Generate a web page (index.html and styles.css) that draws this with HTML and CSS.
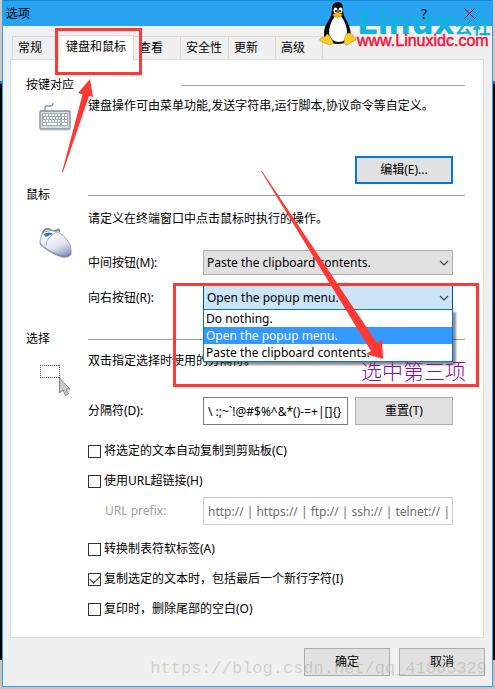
FILE: index.html
```
<!DOCTYPE html>
<html lang="zh-CN">
<head>
  <meta charset="UTF-8" />
  <meta name="viewport" content="width=device-width, initial-scale=1.0"/>
  <title>选项</title>
  <link rel="stylesheet" href="styles.css">
</head>
<body>
<div class="window">
  <header class="titlebar">
    <h1>选项</h1>
    <button class="win-btn" aria-label="帮助">?</button>
    <button class="win-btn" aria-label="关闭">
      <svg width="11" height="11" viewBox="0 0 11 11"><path d="M.5 .5l10 10M10.5 .5l-10 10" stroke="#111" fill="none"/></svg>
    </button>
  </header>

  <nav class="tabs">
    <button class="tab">常规</button>
    <button class="tab active">键盘和鼠标</button>
    <button class="tab">查看</button>
    <button class="tab">安全性</button>
    <button class="tab">更新</button>
    <button class="tab">高级</button>
  </nav>

  <main class="panel">
    <section class="group keys">
      <h2><span class="wide">按键对应</span></h2>
      <div class="icon">
        <svg width="32" height="30" viewBox="0 0 32 30">
          <path d="M6 9V6q0-2 2-2h3q3 0 3-3" fill="none" stroke="#8694a0" stroke-width="1.4"/>
          <rect x="1" y="9" width="30" height="18" rx="1" fill="#d3dbe0" stroke="#84919b" stroke-width="1.4"/>
          <rect x="3" y="11" width="26" height="13" fill="#a3aeb6"/>
          <path d="M4 13h17M5 16h16M4 19h17M23 13h5M23 16h5M23 19h5" stroke="#fff" stroke-width="2" stroke-dasharray="2 1"/>
          <path d="M4 22h3M8 22h10M19 22h2M23 22h5" stroke="#fff" stroke-width="2"/>
          <path d="M1 28h30" stroke="#bcc4ca"/>
        </svg>
      </div>
      <div class="content">
        <p>键盘操作可由菜单功能,发送字符串,运行脚本,协议命令等自定义。</p>
        <button class="btn default">编辑(E)...</button>
      </div>
    </section>

    <section class="group mouse">
      <h2><span>鼠标</span></h2>
      <div class="icon">
        <svg width="34" height="34" viewBox="0 0 34 34">
          <defs>
            <linearGradient id="body" x1="0.200" y1="0" x2="0.700" y2="1">
              <stop offset="0" stop-color="#fff"/>
              <stop offset=".6" stop-color="#e3e6f1"/>
              <stop offset="1" stop-color="#8f99bc"/>
            </linearGradient>
          </defs>
          <path d="M4 9Q6 3 11 4q4 3 8 1 3-2 2 2" fill="none" stroke="#7b8594" stroke-width="1.600"/>
          <path d="M2 16Q3 9 6 7q7-3 14 0 6 3 10 9 3 4 3 9v4q-2 4-9 3-7-2-13-6-6-3-9-7z" fill="url(#body)" stroke="#8790ae" stroke-width=".8"/>
          <path d="M2 17q4 5 10 8 9 6 16 5 4-1 5-4v3q-2 4-9 3-7-2-13-6-6-3-9-7z" fill="#6f7ba3" opacity=".55"/>
          <path d="M8 21q0-9 11-14" fill="none" stroke="#9ba2b8" stroke-width=".8"/>
          <path d="M6 9q5-3 9 0-4 1-7 3-2-1-2-3z" fill="#3571d8"/>
        </svg>
      </div>
      <div class="content">
        <p>请定义在终端窗口中点击鼠标时执行的操作。</p>
        <div class="field">
          <label for="middle">中间按钮(M):</label>
          <div class="combo">
            <select id="middle"><option>Paste the clipboard contents.</option></select>
            <svg class="chevron" width="10" height="6" viewBox="0 0 10 6"><path d="M1 1l4 4 4-4" fill="none" stroke="#444" stroke-width="1.2"/></svg>
          </div>
        </div>
        <div class="field">
          <label for="right">向右按钮(R):</label>
          <div class="combo open">
            <select id="right"><option>Open the popup menu.</option></select>
            <svg class="chevron" width="10" height="6" viewBox="0 0 10 6"><path d="M1 1l4 4 4-4" fill="none" stroke="#444" stroke-width="1.2"/></svg>
            <ul class="menu">
              <li>Do nothing.</li>
              <li class="selected">Open the popup menu.</li>
              <li>Paste the clipboard contents.</li>
            </ul>
          </div>
        </div>
      </div>
    </section>

    <section class="group selection">
      <h2><span>选择</span></h2>
      <div class="icon">
        <svg width="34" height="34" viewBox="0 0 34 34">
          <path d="M2 2.500h20M2 14.500h20M2.500 2v13M21.500 2v13" fill="none" stroke="#555" stroke-dasharray="1 1"/>
          <path d="M21.500 15v15l3.500-3 2.500 5.500 3-1.500-2.500-5h4z" fill="#c9c9c9" stroke="#858585"/>
        </svg>
      </div>
      <div class="content">
        <p>双击指定选择时使用的分隔符。</p>
        <div class="field">
          <label for="delim">分隔符(D):</label>
          <input type="text" id="delim" value="\ :;~`!@#$%^&amp;*()-=+|[]{}">
          <button class="btn">重置(T)</button>
        </div>
        <label class="check"><input type="checkbox">将选定的文本自动复制到剪贴板(C)</label>
        <label class="check"><input type="checkbox">使用URL超链接(H)</label>
        <div class="field prefix">
          <label for="prefix">URL prefix:</label>
          <input type="text" id="prefix" value="http:// | https:// | ftp:// | ssh:// | telnet:// |" disabled>
        </div>
        <label class="check"><input type="checkbox">转换制表符软标签(A)</label>
        <label class="check"><input type="checkbox" checked>复制选定的文本时，包括最后一个新行字符(I)</label>
        <label class="check"><input type="checkbox">复印时，删除尾部的空白(O)</label>
      </div>
    </section>
  </main>

  <footer class="actions">
    <button class="btn">确定</button>
    <button class="btn">取消</button>
  </footer>
</div>

<!-- site logo -->
<div class="logo">
  <svg width="38" height="45" viewBox="0 0 38 45">
    <path d="M19 1q-6 0-6 7 0 5-2 9-7 10-6 17 0 8 14 9 14-1 13-9-1-10-6-17-2-4-2-9 0-7-5-7z" fill="#080808"/>
    <path d="M16 15q-6 8-6 17 2 9 10 9 8 0 8-9 0-9-6-17-3-2-6 0z" fill="#fff"/>
    <ellipse cx="16.500" cy="9.500" rx="2" ry="3" fill="#fff"/>
    <ellipse cx="21.500" cy="9.500" rx="2" ry="3" fill="#fff"/>
    <circle cx="17" cy="10" r="1"/>
    <circle cx="21" cy="10" r="1"/>
    <path d="M13.500 14q5-5 10 0-5 5-10 0z" fill="#f9b613" stroke="#c98208" stroke-width=".5"/>
    <path d="M8 33q-2 4-6 4-3 2 1 4 5 2 8 3 5-1 2-5-2-5-5-6z" fill="#fccb28" stroke="#a87a0a" stroke-width=".5"/>
    <path d="M27 33q-2 5-2 9 2 4 6 0 3-2 6-3 1-2-3-4-1-3-4-3z" fill="#fccb28" stroke="#a87a0a" stroke-width=".5"/>
  </svg>
  <div class="logo-text">
    <div class="logo-name">Linux<span>公社</span></div>
    <div class="logo-url">www.Linuxidc.com</div>
  </div>
</div>

<!-- walkthrough marks over the dialog -->
<svg class="marks" width="495" height="400" viewBox="0 0 495 400">
  <g fill="none" stroke="#ff3836" stroke-width="3">
    <rect x="56.500" y="29.500" width="84" height="44"/>
    <rect x="174.500" y="284.500" width="303" height="101"/>
  </g>
  <path d="M62 172L82.500 94.500 78 93 90 79 93 97 89 96 63 172z" fill="#ff3836"/>
  <path d="M261 171L371 351 366 354 383 359 382 340 377 343 262 171z" fill="#ff3836"/>
</svg>
<div class="note">选中第三项</div>
<div class="watermark">https://blog.csdn.net/qq_41865329</div>
</body>
</html>
```
FILE: styles.css
```
* { box-sizing: border-box; }
body {
  position: relative;
  margin: 0;
  padding: 0 2px 2px;
  background: linear-gradient(#c9c9c9 81px, #0878c8 81px, #0878c8 84px, #000 84px, #000 660px, #c4c4c4 660px);
  font-family: "Noto Sans", "Noto Sans CJK SC", sans-serif;
  font-size: 12px;
  line-height: 16px;
  color: #000;
}
h1, h2, p, ul { margin: 0; padding: 0; font-size: 12px; font-weight: normal; }
button, input, select { font: inherit; color: inherit; margin: 0; }

.window { background: #f0f0f0; border: 1px solid #27a1f0; border-top: none; }
.titlebar { display: flex; align-items: center; height: 26px; padding: 0 13px 0 3px; background: #27a3f2; border-top: 1px solid #1787d0; }
.titlebar h1 { flex: 1; }
.win-btn { position: relative; z-index: 2; display: flex; justify-content: center; align-items: center; width: 20px; height: 24px; padding: 0; border: none; background: none; font-size: 14px; }
.win-btn + .win-btn { margin-left: 25px; }

.tabs { display: flex; align-items: flex-end; padding: 9px 9px 0; }
.tab { width: 47px; height: 23px; padding: 0 0 0 5px; border: 1px solid #d9d9d9; border-left: none; border-bottom: none; background: #f0f0f0; text-align: left; }
.tab:first-child { border-left: 1px solid #d9d9d9; }
.tab:nth-child(4) { width: 48px; }
.tab.active { width: 75px; height: 25px; margin-bottom: -1px; padding: 0 0 3px 7px; background: #fff; z-index: 1; }

.panel { margin: 0 8px 0 7px; padding: 17px 18px 20px 15px; background: #fff; border: 1px solid #dcdcdc; }
.group { display: grid; grid-template-columns: 62px minmax(0, 1fr); }
.group h2 { grid-column: 1 / 3; display: flex; align-items: center; }
.group h2 span { width: 62px; }
.group h2 .wide { width: 156px; }
.group h2::after { content: ""; flex: 1; height: 1px; background: #a0a0a0; }
.group .icon { padding: 9px 0 0 13px; }
.group .content { padding-right: 12px; }
.group.keys .content { padding-top: 5px; }
.group.keys .btn { display: block; margin: 42px 0 0 auto; }
.group.mouse { margin-top: 3px; }
.group.mouse .icon { padding: 22px 0 0 12px; }
.group.mouse .content { padding-top: 8px; }
.group.mouse p { margin-bottom: 23px; }
.group.selection { margin-top: 21px; }
.group.selection .icon { padding: 16px 0 0 12px; }
.group.selection .content { padding-top: 6px; }
.group.selection p { margin-bottom: 28px; }

.btn { width: 98px; height: 28px; padding: 0; border: 1px solid #adadad; background: #e1e1e1; }
.btn.default { border: 2px solid #0078d7; }

.field { display: flex; align-items: center; }
.field + .field { margin-top: 10px; }
.field label { width: 115px; }
.field input { flex: 1; min-width: 0; height: 28px; padding: 0 4px; border: 1px solid #7a7a7a; background: #fff; }
.field .btn { margin-left: 7px; }
.field.prefix { margin: 8px 0 16px; color: #a0a0a0; }
.field.prefix label { width: 115px; padding-left: 17px; }
.field.prefix input { border-color: #ccc; color: #6d6d6d; }

.combo { position: relative; flex: 1; }
.combo select { display: block; width: 100%; height: 25px; padding: 0 3px; border: 1px solid #adadad; border-radius: 0; background: #e1e1e1; appearance: none; }
.combo.open select { border-color: #005499; background: #cce4f7; }
.chevron { position: absolute; right: 4px; top: 10px; }
.menu { position: absolute; left: 0; right: 0; top: 24px; border: 1px solid #0078d7; background: #fff; list-style: none; box-shadow: 3px 3px 2px rgba(0,0,0,0.45); }
.menu li { height: 17px; padding-left: 2px; line-height: 17px; }
.menu .selected { background: #3399ff; color: #fff; }

.check { display: flex; align-items: center; margin-top: 14px; }
.field + .check { margin-top: 18px; }
.prefix + .check { margin-top: 0; }
.check input { display: grid; place-content: center; width: 13px; height: 13px; margin-right: 3px; border: 1px solid #333; background: #fff; appearance: none; }
.check input:checked::before { content: ""; width: 9px; height: 5px; margin-top: -2px; border: solid #333; border-width: 0 0 1px 1px; transform: rotate(-45deg); }

.actions { display: flex; justify-content: flex-end; gap: 9px; padding: 10px 7px; }
.actions .btn { width: 86px; }

.logo { position: absolute; top: 1px; right: 2px; display: flex; pointer-events: none; }
.logo-text { width: 136px; padding-top: 8px; white-space: nowrap; }
.logo-name { height: 23px; color: #13b2dd; font-family: "DejaVu Sans", sans-serif; font-size: 32px; font-weight: bold; line-height: 28px; }
.logo-name span { font-family: "Noto Sans CJK SC", sans-serif; font-size: 18px; }
.logo-url { color: #f5123c; font-family: "Liberation Sans", sans-serif; font-size: 16px; line-height: 18px; -webkit-text-stroke: 0.5px #f5123c; }
.marks { position: absolute; left: 0; top: 0; pointer-events: none; }
.note { position: absolute; right: 29px; top: 359px; color: #8a0a9a; font-size: 21px; font-weight: 300; line-height: 24px; }
.watermark { position: absolute; right: 8px; bottom: 10px; color: rgba(150,150,130,0.35); font-family: "Liberation Mono", monospace; font-size: 17px; line-height: 20px; pointer-events: none; }
```
